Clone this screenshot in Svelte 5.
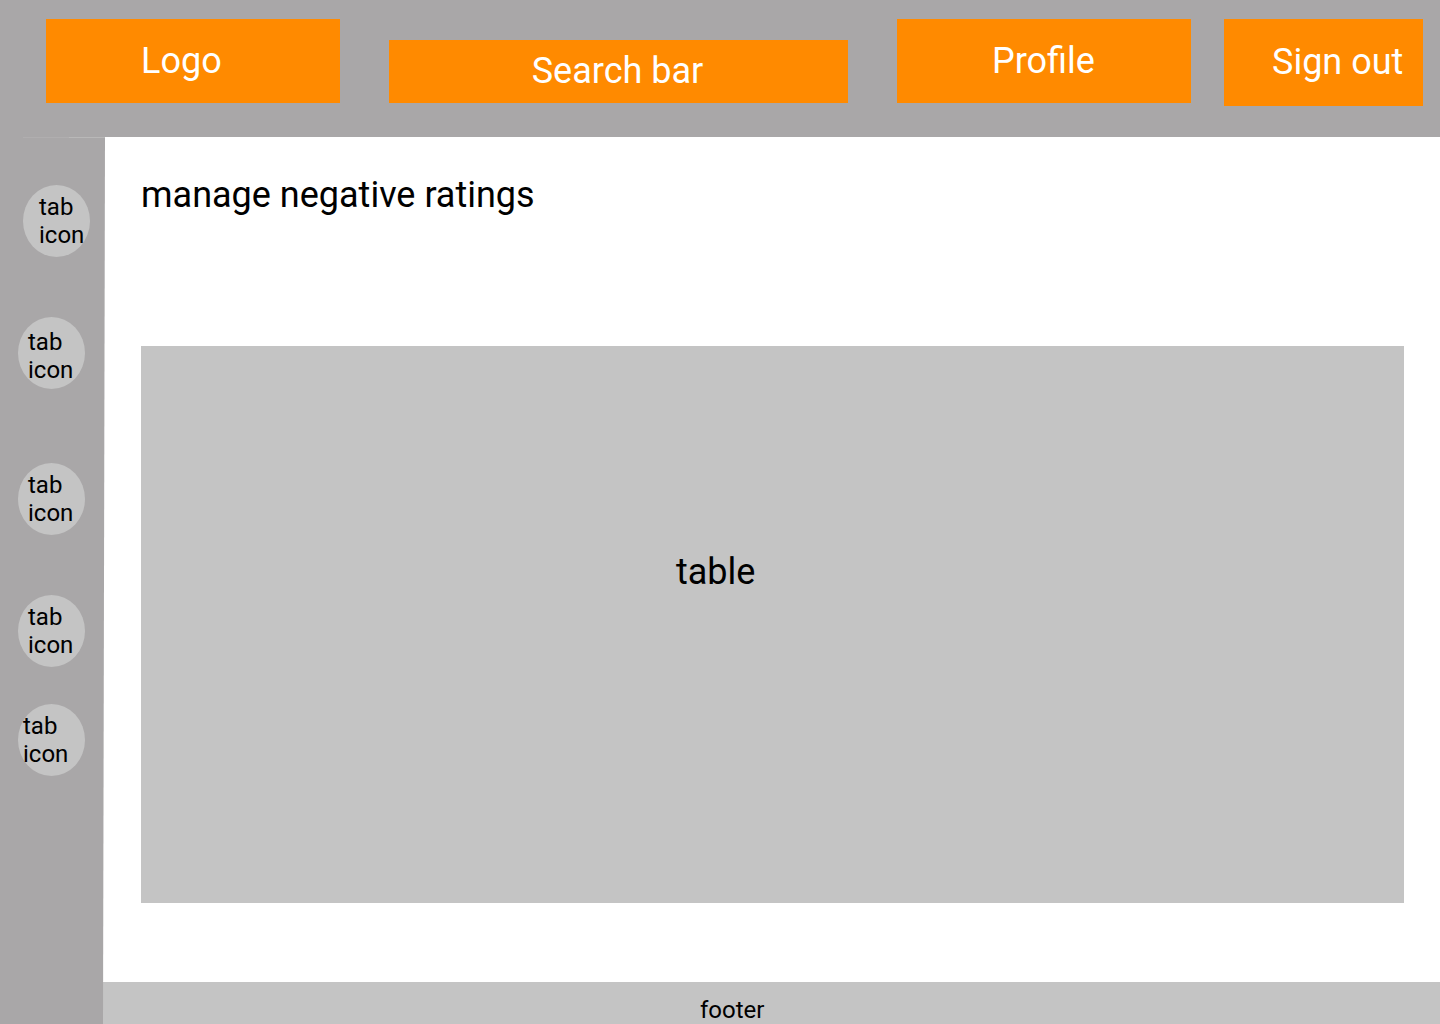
<script>
  const tabs = [
    { id: 1, variant: 'outset' },
    { id: 2, variant: 'low' },
    { id: 3, variant: '' },
    { id: 4, variant: '' },
    { id: 5, variant: 'near' }
  ];
</script>

<div class="page">
  <header class="topbar">
    <a class="block logo" href="#home">Logo</a>
    <input class="block search" type="text" aria-label="Search bar" placeholder="Search bar" />
    <button class="block profile" type="button">Profile</button>
    <button class="block signout" type="button">Sign out</button>
  </header>

  <div class="body">
    <nav class="sidebar" aria-label="Tabs">
      {#each tabs as tab (tab.id)}
        <button class="tab {tab.variant}" type="button">tab icon</button>
      {/each}
    </nav>

    <div class="content">
      <main>
        <h1>manage negative ratings</h1>
        <section class="table-area">table</section>
      </main>
      <footer>footer</footer>
    </div>
  </div>
</div>

<style>
  :global(body) {
    margin: 0;
  }

  .page {
    display: flex;
    flex-direction: column;
    min-height: 100vh;
    background: #fff;
    color: #000;
    font: 400 36px/42px Roboto, sans-serif;
  }

  .page * {
    box-sizing: border-box;
  }

  .topbar {
    display: flex;
    align-items: flex-start;
    gap: 33px;
    padding: 19px 17px 31px 46px;
    background: #a9a7a8;
  }

  .block {
    display: block;
    min-width: 0;
    height: 84px;
    margin: 0;
    padding: 0;
    border: 0;
    border-radius: 0;
    background: #ff8a00;
    color: #fff;
    font: inherit;
    text-align: left;
    text-decoration: none;
    white-space: nowrap;
  }

  .logo,
  .profile {
    flex: 294 1 294px;
    padding: 21px 0 21px 95px;
  }

  .logo,
  .search {
    margin-right: 16px;
  }

  .search {
    flex: 459 1 459px;
    height: 63px;
    margin-top: 21px;
    padding: 0 2px 2px 0;
    text-align: center;
    outline: none;
  }

  .search::placeholder {
    color: #fff;
    opacity: 1;
  }

  .signout {
    flex: 199 1 199px;
    height: 87px;
    padding: 0 0 2px 48px;
  }

  .body {
    display: flex;
    flex: 1;
  }

  /* The right edge leans in slightly and lies over the content column. */
  .sidebar {
    position: relative;
    z-index: 1;
    display: flex;
    flex: none;
    flex-direction: column;
    align-items: flex-start;
    width: 105px;
    margin-right: -3px;
    padding: 48px 0 48px 18px;
    background:
      linear-gradient(90deg, transparent 23px, #b0aeaf 23px 69px, #b9b8b8 69px) top / 100% 1px no-repeat,
      #a9a7a8;
    clip-path: polygon(0 0, 105px 0, 103px 100%, 0 100%);
  }

  .tab {
    width: 67px;
    height: 72px;
    margin: 0 0 60px;
    padding: 8px 0 8px 10px;
    border: 0;
    border-radius: 50%;
    background: #c4c4c4;
    color: #000;
    font: inherit;
    font-size: 24px;
    line-height: 28px;
    text-align: left;
  }

  .tab.outset {
    margin-left: 5px;
    padding-left: 16px;
  }

  .tab.low {
    margin-bottom: 74px;
    padding: 11px 0 5px 10px;
  }

  .tab.near {
    margin-top: -23px;
    padding-left: 5px;
  }

  .content {
    display: flex;
    flex: 1;
    flex-direction: column;
    min-width: 0;
  }

  main {
    display: flex;
    flex: 1;
    flex-direction: column;
    padding: 37px 36px 79px 39px;
  }

  h1 {
    margin: 0 0 130px;
    font: inherit;
  }

  .table-area {
    flex: 1;
    padding: 205px 0 205px 535px;
    background: #c4c4c4;
  }

  footer {
    padding: 14px 0 0 598px;
    background: #c4c4c4;
    font-size: 24px;
    line-height: 28px;
  }
</style>
